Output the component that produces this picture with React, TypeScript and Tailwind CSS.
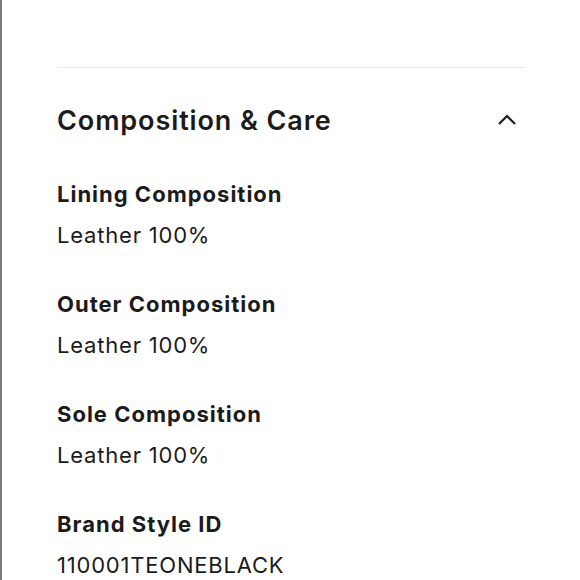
import React from "react";

const items = [
  { label: "Lining Composition", value: "Leather 100%" },
  { label: "Outer Composition", value: "Leather 100%" },
  { label: "Sole Composition", value: "Leather 100%" },
  { label: "Brand Style ID", value: "110001TEONEBLACK" },
];

export default function App() {
  return (
    <div
      className="w-[580px] h-[580px] overflow-hidden bg-white border-l-2 border-[#7a7a7a] text-[#1b1b1b]"
      style={{ fontFamily: "Inter, 'Noto Sans', sans-serif" }}
    >
      <div className="pl-[55px] pr-[55px] pt-[67px]">
        <div className="h-px bg-[#ececec]" />
        <div className="flex items-center justify-between mt-[32px] h-[40px] mb-[38px]">
          <h2 className="text-[27px] font-semibold tracking-[0.9px] leading-none">Composition &amp; Care</h2>
          <svg width="20" height="14" viewBox="0 0 20 14" className="mr-[8px]">
            <path d="M2 11 L10 3 L18 11" fill="none" stroke="#1b1b1b" strokeWidth="2.2" />
          </svg>
        </div>
        <div className="flex flex-col">
          {items.map((it) => (
            <div key={it.label} className="h-[110px] flex flex-col">
              <div className="text-[22px] font-bold tracking-[1px] leading-[32px]">{it.label}</div>
              <div className="text-[22px] font-normal tracking-[0.8px] leading-[32px] mt-[9px]">{it.value}</div>
            </div>
          ))}
        </div>
      </div>
    </div>
  );
}
